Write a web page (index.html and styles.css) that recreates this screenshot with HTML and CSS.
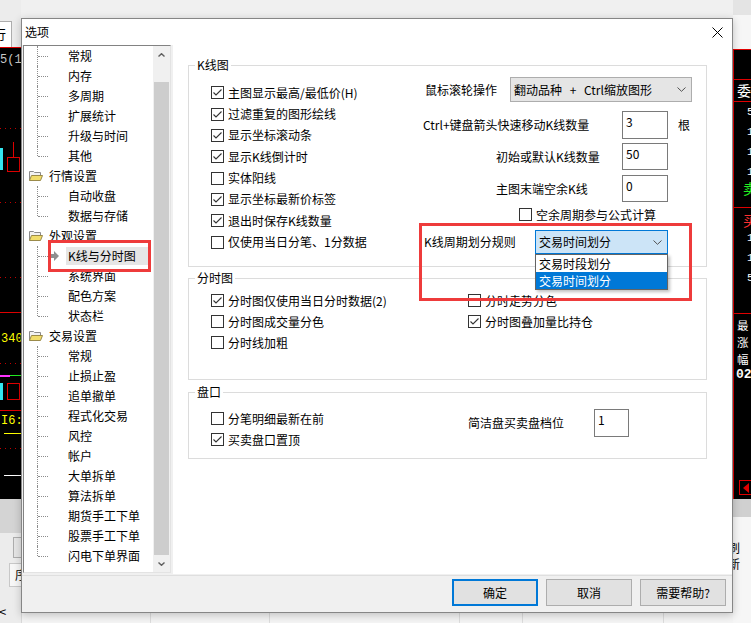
FILE: index.html
```html
<!DOCTYPE html>
<html lang="zh">
<head>
<meta charset="utf-8">
<title>选项</title>
<link rel="stylesheet" href="styles.css">
</head>
<body>
<div class="desk">
  <!-- background application, left strip -->
  <div class="bgl">
    <div class="bgl-tab"><span>行</span></div>
    <div class="bgl-chart">
      <span class="bgl-t1">5(1</span>
      <i class="dot dl1"></i>
      <i class="cyan c1"></i>
      <i class="rv"></i>
      <i class="rbox b1"></i>
      <i class="dot dl2"></i>
      <i class="dot dl3"></i>
      <i class="rl rl1"></i>
      <span class="bgl-t2">340</span>
      <i class="dot dl4"></i>
      <i class="mag"></i>
      <i class="grn"></i>
      <i class="cyan c2"></i>
      <i class="rbox b2"></i>
      <i class="rl rl2"></i>
      <span class="bgl-t3">I6:</span>
      <i class="yl"></i>
      <i class="dot dl5"></i>
      <i class="wl"></i>
    </div>
    <div class="bgl-band"></div>
    <div class="bgl-btn"></div>
    <div class="bgl-tab2"><span>序</span></div>
    <span class="bgl-lt">&lt;</span>
  </div>

  <!-- background application, right strip -->
  <div class="bgr">
    <div class="bgr-top"></div>
    <div class="bgr-chart">
      <i class="rr rr1"></i>
      <span class="bgr-c w1">委</span>
      <i class="rr rr2"></i>
      <span class="bgr-d d1">5</span>
      <span class="bgr-d d2">1</span>
      <span class="bgr-d d3">1</span>
      <span class="bgr-d d4">1</span>
      <span class="bgr-c g1">卖</span>
      <i class="rr rr3"></i>
      <span class="bgr-c r1">买</span>
      <span class="bgr-d d5">1</span>
      <span class="bgr-d d6">1</span>
      <span class="bgr-d d7">5</span>
      <i class="rr rr4"></i>
      <span class="bgr-stack">最<br>涨<br>幅</span>
      <span class="bgr-n">02</span>
      <span class="bgr-arrow"></span>
    </div>
    <div class="bgr-band"></div>
    <span class="bgr-txt">刷新</span>
  </div>
  <div class="bgb">
    <i class="vl v1"></i><i class="vl v2"></i><i class="vl v3"></i><i class="vl v4"></i><i class="vl v5"></i>
  </div>

  <!-- dialog window -->
  <div class="dialog">
    <div class="titlebar">
      <span class="title">选项</span>
      <svg class="close" viewBox="0 0 11 11" aria-hidden="true"><path d="M0.5 0.5L10.5 10.5M10.5 0.5L0.5 10.5"/></svg>
    </div>

    <div class="body">
      <div class="tree">
        <ul class="tree-list">
          <li class="node child"><span class="txt">常规</span></li>
          <li class="node child"><span class="txt">内存</span></li>
          <li class="node child"><span class="txt">多周期</span></li>
          <li class="node child"><span class="txt">扩展统计</span></li>
          <li class="node child"><span class="txt">升级与时间</span></li>
          <li class="node child last"><span class="txt">其他</span></li>
          <li class="node grp"><svg class="folder" viewBox="0 0 16 14" aria-hidden="true"><path class="fb" d="M1.5 11.5V2.5H5.5L6.5 3.5H12.5V6.5"/><path class="ff" d="M1.5 11.5L3.5 6.5H14.5L12.5 11.5Z"/></svg><span class="txt">行情设置</span></li>
          <li class="node child"><span class="txt">自动收盘</span></li>
          <li class="node child last"><span class="txt">数据与存储</span></li>
          <li class="node grp"><svg class="folder" viewBox="0 0 16 14" aria-hidden="true"><path class="fb" d="M1.5 11.5V2.5H5.5L6.5 3.5H12.5V6.5"/><path class="ff" d="M1.5 11.5L3.5 6.5H14.5L12.5 11.5Z"/></svg><span class="txt">外观设置</span></li>
          <li class="node child sel"><svg class="selarrow" viewBox="0 0 9 10" aria-hidden="true"><path d="M0 3H4V0L9 5L4 10V7H0Z"/></svg><span class="txt">K线与分时图</span></li>
          <li class="node child"><span class="txt">系统界面</span></li>
          <li class="node child"><span class="txt">配色方案</span></li>
          <li class="node child last"><span class="txt">状态栏</span></li>
          <li class="node grp"><svg class="folder" viewBox="0 0 16 14" aria-hidden="true"><path class="fb" d="M1.5 11.5V2.5H5.5L6.5 3.5H12.5V6.5"/><path class="ff" d="M1.5 11.5L3.5 6.5H14.5L12.5 11.5Z"/></svg><span class="txt">交易设置</span></li>
          <li class="node child"><span class="txt">常规</span></li>
          <li class="node child"><span class="txt">止损止盈</span></li>
          <li class="node child"><span class="txt">追单撤单</span></li>
          <li class="node child"><span class="txt">程式化交易</span></li>
          <li class="node child"><span class="txt">风控</span></li>
          <li class="node child"><span class="txt">帐户</span></li>
          <li class="node child"><span class="txt">大单拆单</span></li>
          <li class="node child"><span class="txt">算法拆单</span></li>
          <li class="node child"><span class="txt">期货手工下单</span></li>
          <li class="node child"><span class="txt">股票手工下单</span></li>
          <li class="node child last"><span class="txt">闪电下单界面</span></li>
        </ul>
        <div class="vscroll">
          <div class="sb-btn"><svg viewBox="0 0 7 4" aria-hidden="true"><path d="M0.5 3.5L3.5 0.7L6.5 3.5"/></svg></div>
          <div class="sb-gap"></div>
          <div class="sb-thumb"></div>
          <div class="sb-btn"><svg viewBox="0 0 7 4" aria-hidden="true"><path d="M0.5 0.5L3.5 3.3L6.5 0.5"/></svg></div>
        </div>
        <div class="mark mark-tree"></div>
      </div>

      <div class="panel">
        <section class="group g-k">
          <div class="group-title">K线图</div>
          <div class="k-grid">
            <div class="checks k-checks">
              <label class="chk"><span class="box on"><svg viewBox="0 0 11 11"><path d="M1.5 5.5L4 8L9.5 2.5"/></svg></span>主图显示最高/最低价(H)</label>
              <label class="chk"><span class="box on"><svg viewBox="0 0 11 11"><path d="M1.5 5.5L4 8L9.5 2.5"/></svg></span>过滤重复的图形绘线</label>
              <label class="chk"><span class="box on"><svg viewBox="0 0 11 11"><path d="M1.5 5.5L4 8L9.5 2.5"/></svg></span>显示坐标滚动条</label>
              <label class="chk"><span class="box on"><svg viewBox="0 0 11 11"><path d="M1.5 5.5L4 8L9.5 2.5"/></svg></span>显示K线倒计时</label>
              <label class="chk"><span class="box"></span>实体阳线</label>
              <label class="chk"><span class="box on"><svg viewBox="0 0 11 11"><path d="M1.5 5.5L4 8L9.5 2.5"/></svg></span>显示坐标最新价标签</label>
              <label class="chk"><span class="box on"><svg viewBox="0 0 11 11"><path d="M1.5 5.5L4 8L9.5 2.5"/></svg></span>退出时保存K线数量</label>
              <label class="chk"><span class="box"></span>仅使用当日分笔、1分数据</label>
            </div>
            <div class="k-right">
              <div class="kr kr1">
                <span class="lbl">鼠标滚轮操作</span>
                <div class="combo"><span class="combo-txt">翻动品种 + Ctrl缩放图形</span><svg class="chev" viewBox="0 0 9 5"><path d="M0.5 0.5L4.5 4.3L8.5 0.5"/></svg></div>
              </div>
              <div class="kr kr2">
                <span class="lbl">Ctrl+键盘箭头快速移动K线数量</span>
                <div class="field">3</div>
                <span class="unit">根</span>
              </div>
              <div class="kr kr3">
                <span class="lbl">初始或默认K线数量</span>
                <div class="field">50</div>
              </div>
              <div class="kr kr4">
                <span class="lbl">主图末端空余K线</span>
                <div class="field">0</div>
              </div>
              <label class="kr kr5 chk"><span class="box"></span>空余周期参与公式计算</label>
              <div class="kr kr6">
                <span class="lbl">K线周期划分规则</span>
                <div class="combo focus"><span>交易时间划分</span><svg class="chev" viewBox="0 0 9 5"><path d="M0.5 0.5L4.5 4.3L8.5 0.5"/></svg></div>
              </div>
            </div>
          </div>
        </section>

        <section class="group g-fs">
          <div class="group-title">分时图</div>
          <div class="two-col">
            <div class="checks">
              <label class="chk"><span class="box on"><svg viewBox="0 0 11 11"><path d="M1.5 5.5L4 8L9.5 2.5"/></svg></span>分时图仅使用当日分时数据(2)</label>
              <label class="chk"><span class="box"></span>分时图成交量分色</label>
              <label class="chk"><span class="box"></span>分时线加粗</label>
            </div>
            <div class="checks">
              <label class="chk"><span class="box"></span>分时走势分色</label>
              <label class="chk"><span class="box on"><svg viewBox="0 0 11 11"><path d="M1.5 5.5L4 8L9.5 2.5"/></svg></span>分时图叠加量比持仓</label>
            </div>
          </div>
        </section>

        <section class="group g-pk">
          <div class="group-title">盘口</div>
          <div class="two-col pk-col">
            <div class="checks">
              <label class="chk"><span class="box"></span>分笔明细最新在前</label>
              <label class="chk"><span class="box on"><svg viewBox="0 0 11 11"><path d="M1.5 5.5L4 8L9.5 2.5"/></svg></span>买卖盘口置顶</label>
            </div>
            <div class="pk-right">
              <span class="lbl">简洁盘买卖盘档位</span>
              <div class="field small">1</div>
            </div>
          </div>
        </section>

        <ul class="droplist">
          <li>交易时段划分</li>
          <li class="hot">交易时间划分</li>
        </ul>
        <div class="mark mark-rule"></div>
      </div>
    </div>

    <div class="footer">
      <button class="btn default">确定</button>
      <button class="btn">取消</button>
      <button class="btn">需要帮助?</button>
    </div>
  </div>
</div>
</body>
</html>
```

FILE: styles.css
```css
* { box-sizing: border-box; }
html, body { margin: 0; padding: 0; }
body {
  background: #f0f0f0;
  font-family: "Noto Sans CJK SC", "Microsoft YaHei", sans-serif;
  font-size: 12px;
  color: #000;
}
ul { list-style: none; margin: 0; padding: 0; }

.desk {
  position: relative;
  width: 751px;
  height: 623px;
  overflow: hidden;
  background: #f0f0f0;
}

/* ---------- background application ---------- */
.bgl, .bgr, .bgb { position: absolute; }
.bgl { left: 0; top: 0; width: 21px; height: 623px; background: #ececec; }
.bgl-tab {
  position: absolute; left: 0; top: 21px; width: 12px; height: 27px;
  background: #fff; border: 1px solid #adadad; border-left: 0; border-bottom: 0;
  overflow: hidden;
}
.bgl-tab span { position: absolute; left: -7px; top: 4px; font-size: 13px; line-height: 16px; }
.bgl-chart {
  position: absolute; left: 0; top: 47px; width: 21px; height: 452px;
  background: #000; border-top: 1px solid #e00000; overflow: hidden;
}
.bgl-chart i, .bgl-chart span { position: absolute; display: block; }
.bgl-t1 { left: 0; top: 6px; color: #c8c8c8; font: 12px/12px "Liberation Mono", monospace; }
.bgl-t2 { left: 1px; top: 285px; color: #ffff00; font: 12px/12px "Liberation Mono", monospace; }
.bgl-t3 { left: 1px; top: 367px; color: #ffff00; font: 12px/12px "Liberation Mono", monospace; }
.dot { left: 0; width: 21px; height: 1px; background: repeating-linear-gradient(90deg, #c00000 0 1px, transparent 1px 5px); }
.dl1 { top: 80px; } .dl2 { top: 154px; } .dl3 { top: 229px; } .dl4 { top: 315px; } .dl5 { top: 400px; }
.cyan { left: 0; width: 3px; background: #33e6f0; }
.c1 { top: 100px; height: 22px; } .c2 { top: 335px; height: 17px; }
.rv { left: 13px; top: 94px; width: 1px; height: 15px; background: #e00000; }
.rbox { left: 7px; width: 13px; border: 1px solid #e00000; }
.b1 { top: 109px; height: 15px; } .b2 { top: 335px; height: 17px; }
.rl { left: 0; width: 21px; height: 1px; background: #e00000; }
.rl1 { top: 264px; } .rl2 { top: 362px; }
.mag { left: 0; top: 327px; width: 10px; height: 2px; background: #ff33ff; }
.grn { left: 10px; top: 327px; width: 11px; height: 1px; background: #22ee22; }
.yl { left: 4px; top: 385px; width: 17px; height: 1px; background: #ffff00; }
.wl { left: 4px; top: 427px; width: 17px; height: 1px; background: #ffffff; }
.bgl-band { position: absolute; left: 0; top: 499px; width: 21px; height: 34px; background: #d4d4d4; }
.bgl-btn { position: absolute; left: 13px; top: 537px; width: 10px; height: 21px; border: 1px solid #adadad; background: #e6e6e6; }
.bgl-tab2 { position: absolute; left: 9px; top: 563px; width: 14px; height: 24px; background: #f7f7f7; border: 1px solid #c8c8c8; overflow: hidden; }
.bgl-tab2 span { position: absolute; left: 5px; top: 3px; line-height: 16px; }
.bgl-lt { position: absolute; left: -1px; top: 604px; font-size: 13px; line-height: 16px; }

.bgr { left: 733px; top: 0; width: 18px; height: 623px; background: #f6f6f6; }
.bgr-top { position: absolute; left: 0; top: 0; width: 18px; height: 15px; background: #e4e4e4; }
.bgr-chart {
  position: absolute; left: 0; top: 49px; width: 18px; height: 450px;
  background: #000; border-left: 1px solid #e00000; border-top: 1px solid #e00000; overflow: hidden;
}
.bgr-chart i, .bgr-chart span { position: absolute; display: block; }
.rr { left: 0; width: 18px; height: 1px; background: #e00000; }
.rr1 { top: 29px; } .rr2 { top: 51px; } .rr3 { top: 157px; } .rr4 { top: 263px; }
.bgr-c { left: 3px; font-size: 14px; line-height: 16px; color: #fff; }
.w1 { top: 32px; }
.bgr-stack {
  left: 3px; top: 267px; width: 15px; height: 49px; overflow: hidden;
  font-size: 11.5px; line-height: 17px; color: #fff;
}
.g1 { top: 130px; left: 9px; color: #22ee22; }
.r1 { top: 162px; left: 9px; color: #ff3030; }
.bgr-d { left: 13px; font: 11px/12px "Liberation Mono", monospace; color: #fff; }
.d1 { top: 56px; } .d2 { top: 76px; } .d3 { top: 96px; } .d4 { top: 116px; }
.d5 { top: 182px; } .d6 { top: 202px; } .d7 { top: 222px; }
.bgr-n { left: 2px; top: 318px; font: bold 13px/14px "Liberation Mono", monospace; color: #fff; }
.bgr-arrow {
  left: 5px; top: 430px; width: 14px; height: 15px; border: 1px solid #e00000;
}
.bgr-arrow::before {
  content: ""; position: absolute; left: 3px; top: 2px;
  border-style: solid; border-width: 5px 6px 5px 0; border-color: transparent #e00000 transparent transparent;
}
.bgr-band { position: absolute; left: 0; top: 499px; width: 18px; height: 18px; background: #d0d0d0; }
.bgr-txt { position: absolute; left: -5px; top: 540px; font-size: 12px; line-height: 16px; }
.bgb {
  left: 21px; top: 612px; width: 712px; height: 11px; background: #f4f4f4;
  border-left: 1px solid #d8d8d8;
}
.vl { position: absolute; top: 0; width: 1px; height: 11px; background: #dcdcdc; }
.v1 { left: 128px; } .v2 { left: 247px; } .v3 { left: 437px; } .v4 { left: 500px; } .v5 { left: 641px; }

/* ---------- dialog ---------- */
.dialog {
  position: absolute;
  left: 21px; top: 18px;
  width: 712px; height: 595px;
  border: 1px solid #868686;
  background: #f0f0f0;
  display: flex;
  flex-direction: column;
  box-shadow: 0 2px 8px rgba(0, 0, 0, 0.22);
}
.titlebar {
  flex: none;
  height: 26px;
  background: #fff;
  display: flex;
  align-items: center;
  justify-content: space-between;
  padding: 0 9px 0 3px;
}
.title { line-height: 16px; }
.close { width: 11px; height: 11px; }
.close path { stroke: #000; stroke-width: 1; fill: none; }

.body {
  flex: none;
  height: 530px;
  display: flex;
  align-items: flex-start;
  gap: 2px;
  padding-left: 1px;
}

/* tree */
.tree {
  position: relative;
  width: 148px;
  height: 528px;
  background: #fff;
  border: 1px solid;
  border-color: #828282 #e3e3e3 #e3e3e3 #828282;
  display: flex;
}
.tree-list { flex: 1; }
.node {
  position: relative;
  height: 20px;
  display: flex;
  align-items: center;
  line-height: 16px;
  white-space: nowrap;
}
.child { padding-left: 42px; }
.child .txt { padding-left: 2px; }
.child::before {
  content: ""; position: absolute; left: 13px; top: 0; bottom: 0;
  border-left: 1px dotted #8c8c8c;
}
.child.last::before { bottom: 10px; }
.child::after {
  content: ""; position: absolute; left: 14px; top: 10px; width: 10px;
  border-top: 1px dotted #8c8c8c;
}
.grp { padding-left: 4px; }
.folder { width: 16px; height: 14px; margin-right: 5px; }
.folder .fb { fill: #f2f2f2; stroke: #8a8a8a; stroke-width: 1; }
.folder .ff { fill: #f1dd6b; stroke: #9a8a4a; stroke-width: 1; }
.sel { padding-left: 26px; }
.selarrow { width: 9px; height: 10px; margin-right: 7px; }
.selarrow path { fill: #8f8f8f; }
.sel .txt { background: #e6e6e6; padding: 1px 12px 1px 2px; }

.vscroll {
  flex: none;
  width: 17px;
  display: flex;
  flex-direction: column;
  background: #f0f0f0;
}
.sb-btn { height: 17px; display: flex; align-items: center; justify-content: center; }
.sb-btn svg { width: 7px; height: 4px; }
.sb-btn path { stroke: #606060; stroke-width: 1.4; fill: none; }
.sb-gap { height: 19px; }
.sb-thumb { height: 473px; margin: 0 1px; background: #cdcdcd; }

.mark { position: absolute; border: 3px solid #ee3b3b; pointer-events: none; }
.mark-tree { left: 24px; top: 194px; width: 103px; height: 32px; }

/* right panel */
.panel {
  position: relative;
  width: 559px;
  height: 529px;
  background: #fff;
  padding: 20px 0 0 15px;
}
.group {
  width: 519px;
  border: 1px solid #dcdcdc;
}
.group + .group { margin-top: 11px; }
.g-k { height: 202px; }
.g-fs { height: 102px; }
.g-pk { height: 67px; margin-top: 12px !important; }
.group-title {
  width: max-content;
  margin: -9px 0 0 6px;
  padding: 0 2px;
  background: #fff;
  line-height: 16px;
}

.chk {
  display: flex;
  align-items: center;
  gap: 4px;
  white-space: nowrap;
  line-height: 16px;
}
.box {
  flex: none;
  width: 13px; height: 13px;
  border: 1px solid #333;
  background: #fff;
  display: flex;
  align-items: center;
  justify-content: center;
}
.box svg { width: 11px; height: 11px; }
.box path { stroke: #333; stroke-width: 1.1; fill: none; }

.k-grid { display: grid; grid-template-columns: 230px 1fr; }
.checks { padding-left: 22px; }
.k-checks { padding-top: 9px; }
.k-checks .chk { height: 21.35px; }

.k-right { display: flex; flex-direction: column; }
.kr { display: flex; align-items: center; white-space: nowrap; }
.lbl { line-height: 16px; flex: none; }
.kr1 { margin-top: 4px; height: 25px; }
.kr1 .lbl { margin-left: 6px; width: 85px; }
.kr2 { margin-top: 9px; height: 28px; }
.kr2 .lbl { margin-left: 4px; width: 199px; }
.kr3 { margin-top: 4px; height: 27px; }
.kr4 { margin-top: 5px; height: 27px; }
.kr3 .lbl, .kr4 .lbl { margin-left: 77px; width: 126px; }
.kr5 { margin-top: 6px; height: 13px; padding-left: 100px; }
.kr6 { margin-top: 9px; height: 24px; }
.kr6 .lbl { margin-left: 5px; width: 111px; }

.combo {
  height: 100%;
  width: 182px;
  background: #e5e5e5;
  border: 1px solid #adadad;
  display: flex;
  align-items: center;
  justify-content: space-between;
  padding: 0 5px 0 3px;
  line-height: 16px;
}
.combo-txt { word-spacing: 5px; }
.combo.focus { width: 133px; background: #cce4f7; border-color: #0078d7; }
.chev { width: 9px; height: 5px; }
.chev path { stroke: #505050; stroke-width: 1; fill: none; }

.field {
  height: 100%;
  width: 46px;
  border: 1px solid #7a7a7a;
  background: #fff;
  padding: 2px 3px;
  line-height: 16px;
}
.field.small { width: 35px; height: 28px; }
.unit { margin-left: 10px; line-height: 16px; }

.two-col { display: grid; grid-template-columns: 279px 1fr; padding-top: 4px; }
.two-col .chk { height: 21px; }
.two-col .checks + .checks { padding-left: 0; }
.pk-col { padding-top: 8px; }
.pk-right { display: flex; align-items: center; margin-top: 1px; height: 28px; }
.pk-right .lbl { width: 126px; }

.droplist {
  position: absolute;
  left: 362px; top: 209px;
  width: 133px;
  border: 1px solid #646464;
  background: #fff;
  box-shadow: 2px 2px 3px rgba(0, 0, 0, 0.25);
}
.droplist li { height: 17px; line-height: 17px; padding-left: 3px; }
.droplist .hot { background: #0078d7; color: #fff; }
.mark-rule { left: 246px; top: 178px; width: 273px; height: 78px; }

/* footer */
.footer {
  flex: none;
  height: 37px;
  display: flex;
  justify-content: flex-end;
  gap: 8px;
  padding: 3px 6px 0 0;
  border-top: 1px solid #dfdfdf;
}
.btn {
  width: 86px;
  height: 27px;
  background: #e1e1e1;
  border: 1px solid #adadad;
  font: inherit;
  line-height: 16px;
  color: #000;
  padding: 0;
}
.btn.default { border: 2px solid #0078d7; }
```
